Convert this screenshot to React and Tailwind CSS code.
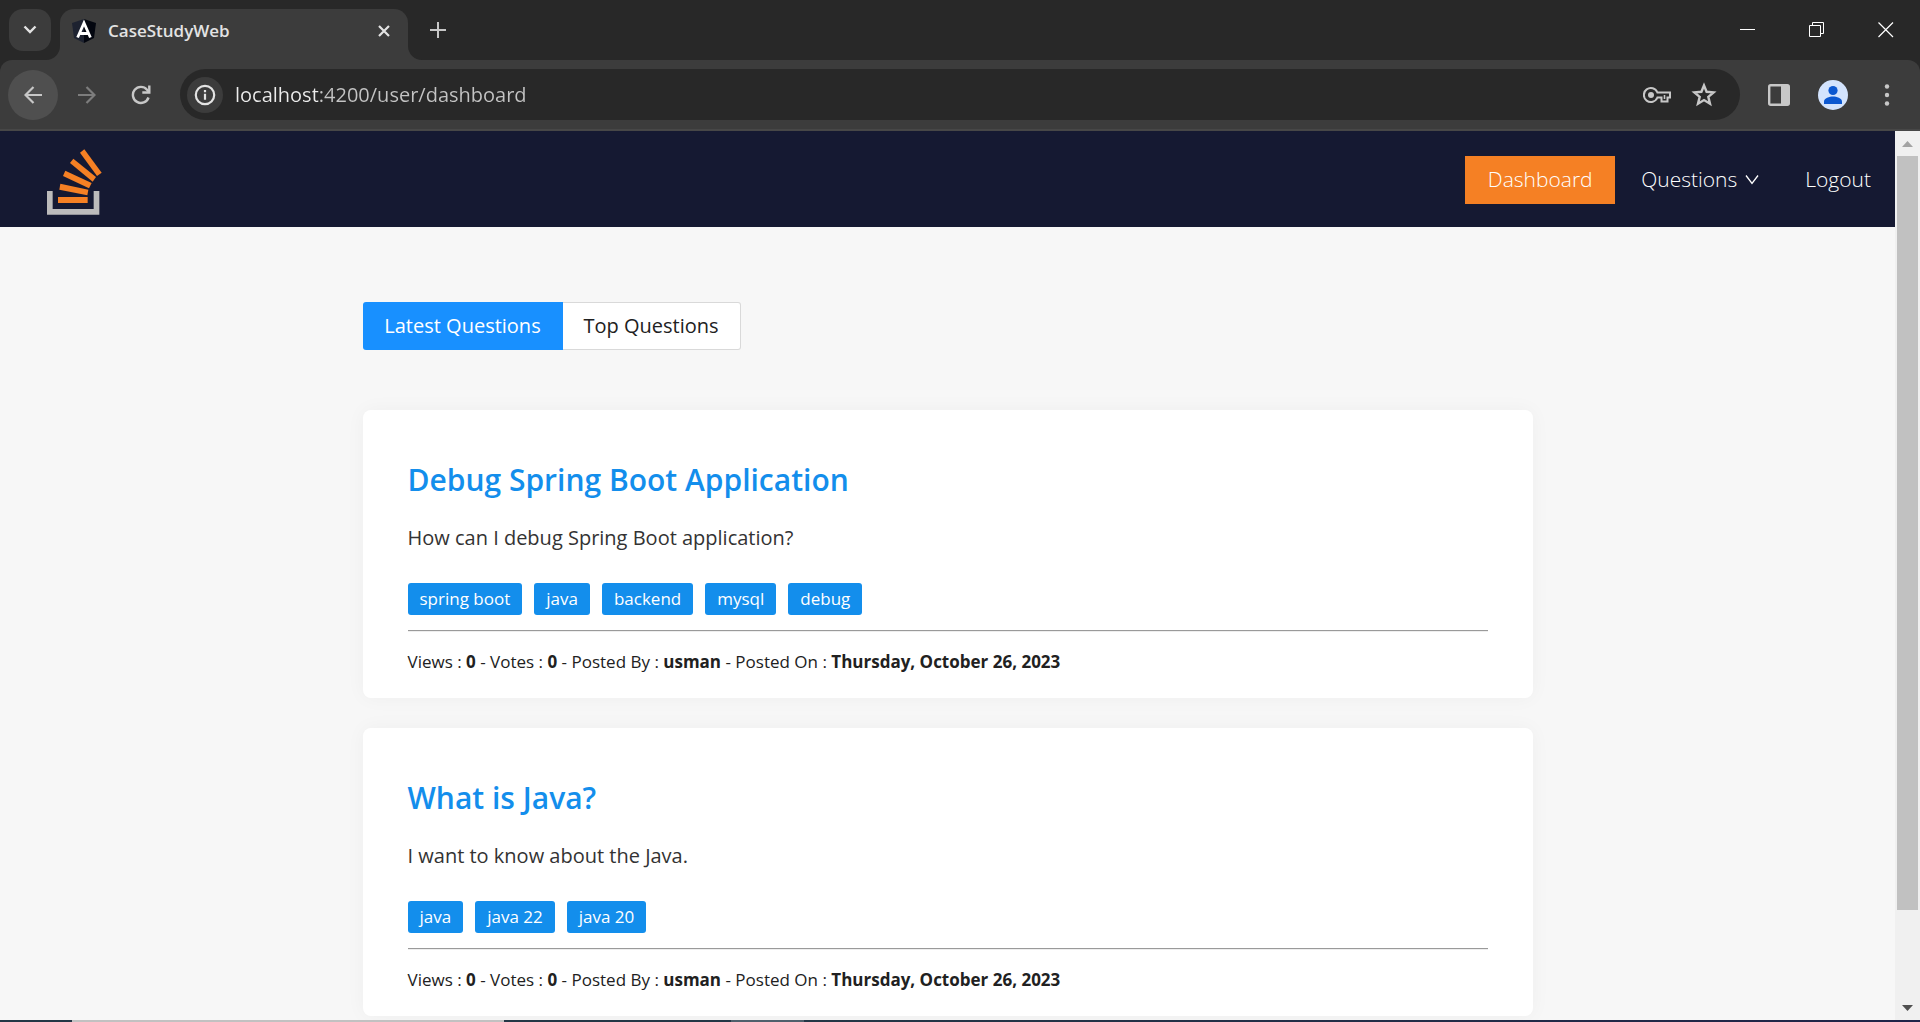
const questions = [
  {
    title: "Debug Spring Boot Application",
    body: "How can I debug Spring Boot application?",
    tags: ["spring boot", "java", "backend", "mysql", "debug"],
    views: 0,
    votes: 0,
    author: "usman",
    date: "Thursday, October 26, 2023",
  },
  {
    title: "What is Java?",
    body: "I want to know about the Java.",
    tags: ["java", "java 22", "java 20"],
    views: 0,
    votes: 0,
    author: "usman",
    date: "Thursday, October 26, 2023",
  },
];

function AngularIcon() {
  return (
    <svg width="24" height="24" viewBox="0 0 24 24" aria-hidden="true">
      <path d="M12 0 24 4l-2 15-10 5Z" fill="#03060f" />
      <path d="M12 0 0 4l2 15 10 5Z" fill="#1d2230" />
      <path d="M5.600 18.500 12 4l6.400 14.500M8.400 14.500h7.200" fill="none" stroke="#fff" strokeWidth="2.800" />
    </svg>
  );
}

function TabStrip() {
  return (
    <div className="flex h-[60px] items-start bg-[#282828] pl-[9px] pt-[9px] text-[#e3e3e3]">
      <button aria-label="Search tabs" className="flex size-[42px] items-center justify-center rounded-[14px] bg-[#3c3c3c]">
        <svg width="14" height="10" viewBox="0 0 14 10" fill="none" stroke="currentColor" strokeWidth="2.400">
          <path d="m1.500 1.500 5.500 5.500 5.500-5.500" />
        </svg>
      </button>
      <div className="relative ml-[9px] flex h-[51px] w-[348px] items-center rounded-t-[14px] bg-[#3c3c3c] pb-4 pl-3 pr-[18px]">
        <svg className="absolute -left-3.5 bottom-0" width="14" height="14" viewBox="0 0 14 14" fill="#3c3c3c" aria-hidden="true">
          <path d="M14 0v14H0A14 14 0 0 0 14 0Z" />
        </svg>
        <svg className="absolute -right-3.5 bottom-0" width="14" height="14" viewBox="0 0 14 14" fill="#3c3c3c" aria-hidden="true">
          <path d="M0 0v14h14A14 14 0 0 1 0 0Z" />
        </svg>
        <div className="flex w-full items-center pt-2">
          <AngularIcon />
          <span className="ml-3 flex-1 text-[17px] leading-6 font-semibold">CaseStudyWeb</span>
          <button aria-label="Close tab">
            <svg width="12" height="12" viewBox="0 0 12 12" fill="none" stroke="currentColor" strokeWidth="2.200">
              <path d="m1 1 10 10M11 1 1 11" />
            </svg>
          </button>
        </div>
      </div>
      <button aria-label="New tab" className="ml-[22px] mt-[13px]">
        <svg width="16" height="16" viewBox="0 0 16 16" fill="none" stroke="#c7c7c7" strokeWidth="2">
          <path d="M8 0v16M0 8h16" />
        </svg>
      </button>
      <div className="ml-auto mt-3 flex gap-[53px] pr-[26px] text-white">
        <button aria-label="Minimize">
          <svg width="16" height="17" viewBox="0 0 16 17" stroke="currentColor"><path d="M0 8.500h15" /></svg>
        </button>
        <button aria-label="Restore">
          <svg width="16" height="17" viewBox="0 0 16 17" fill="none" stroke="currentColor">
            <path d="M.5 4.500h11v11H.5ZM3.500 4.500v-3h11v11h-3" />
          </svg>
        </button>
        <button aria-label="Close">
          <svg width="16" height="17" viewBox="0 0 16 17" fill="none" stroke="currentColor" strokeWidth="1.200">
            <path d="m.5 1.500 14.500 14.500M15 1.500.5 16" />
          </svg>
        </button>
      </div>
    </div>
  );
}

function Toolbar() {
  return (
    <div className="bg-[#282828]">
      <div className="flex h-[71px] items-center rounded-t-xl border-b-2 border-[#474747] bg-[#3c3c3c] pl-2 text-[#c7c7c7]">
        <button aria-label="Back" className="flex size-[50px] items-center justify-center rounded-full bg-[#4f4f4f]">
          <svg width="18" height="18" viewBox="0 0 18 18" fill="none" stroke="currentColor" strokeWidth="2.200">
            <path d="M18 9H2M9.500 1 1.500 9l8 8" />
          </svg>
        </button>
        <button aria-label="Forward" className="ml-5" disabled>
          <svg width="18" height="18" viewBox="0 0 18 18" fill="none" stroke="#7d7d7d" strokeWidth="2.200">
            <path d="M0 9h16M8.500 1l8 8-8 8" />
          </svg>
        </button>
        <button aria-label="Reload" className="ml-[35px]">
          <svg width="20" height="20" viewBox="0 0 20 20" fill="none" stroke="currentColor" strokeWidth="2.400">
            <path d="M17.500 12.500A8 8 0 1 1 16 4.700L18 7" />
            <path d="M18.300.5v7h-7" />
          </svg>
        </button>
        <div className="ml-[29px] flex h-[51px] flex-1 items-center rounded-full bg-[#282828] pl-[7px] pr-[23px]">
          <button aria-label="View site information" className="flex size-9 items-center justify-center rounded-full bg-[#3c3c3c] text-[#e3e3e3]">
            <svg width="22" height="22" viewBox="0 0 22 22" fill="none" stroke="currentColor" strokeWidth="2.200">
              <circle cx="11" cy="11" r="9.200" />
              <path d="M11 9.800v6M11 6v2.200" />
            </svg>
          </button>
          <input
            aria-label="Address"
            defaultValue="localhost:4200/user/dashboard"
            className="ml-3 h-9 min-w-0 flex-1 bg-[linear-gradient(90deg,#ececec_83px,#c4c4c4_83px)] bg-clip-text text-[20px] text-transparent outline-none"
          />
          <button aria-label="Passwords">
            <svg width="28" height="18" viewBox="0 0 28 18" fill="none" stroke="currentColor" strokeWidth="2">
              <path d="M14.400 6.500A7 7 0 1 0 14.400 11.500H18.500V15.500H24.500V11.500H27V6.500Z" />
              <circle cx="8" cy="9" r="3" fill="currentColor" stroke="none" />
              <path d="M21.500 9v4" strokeWidth="1.600" />
            </svg>
          </button>
          <button aria-label="Bookmark this tab" className="ml-[20px]">
            <svg width="26" height="26" viewBox="0 0 26 26" fill="none" stroke="currentColor" strokeWidth="2.400">
              <path d="m13 3.500 2.600 6.300 7 .6-5.300 4.500 1.700 6.900-6-3.700-6 3.700 1.700-6.900-5.300-4.500 7-.6Z" />
            </svg>
          </button>
        </div>
        <button aria-label="Side panel" className="ml-7">
          <svg width="22" height="22" viewBox="0 0 22 22" fill="none" stroke="currentColor" strokeWidth="2.400">
            <rect x="1.200" y="1.200" width="19.600" height="19.600" rx="1.500" />
            <path d="M13 1h8v20h-8Z" fill="currentColor" stroke="none" />
          </svg>
        </button>
        <button aria-label="Profile" className="ml-7">
          <svg width="30" height="30" viewBox="0 0 30 30" fill="#0b57d0">
            <circle cx="15" cy="15" r="15" fill="#d3e3fd" />
            <circle cx="15" cy="10.500" r="4.600" />
            <path d="M6 24v-2.500c0-3.300 5.500-5 9-5s9 1.700 9 5V24Z" />
          </svg>
        </button>
        <button aria-label="Menu" className="ml-9 mr-[30px]">
          <svg width="6" height="22" viewBox="0 0 6 22" fill="currentColor">
            <circle cx="3" cy="2.500" r="2.200" />
            <circle cx="3" cy="11" r="2.200" />
            <circle cx="3" cy="19.500" r="2.200" />
          </svg>
        </button>
      </div>
    </div>
  );
}

function Logo() {
  return (
    <svg width="56" height="68" viewBox="78 54 168 204" role="img" aria-label="Home">
      <path d="M89.500 183v62.500h140V183" fill="none" stroke="#bcbbbb" strokeWidth="17" />
      <g fill="#f58024">
        <path d="M114 201h89v18h-89Z" />
        <path d="m121 161 84 18-3 17-84-17Z" />
        <path d="m136 122 79 37-8 16-78-37Z" />
        <path d="m160 86 68 55-10 14-68-56Z" />
        <path d="m193 58 52 70-14 10-51-70Z" />
      </g>
    </svg>
  );
}

function SiteNav() {
  return (
    <header className="flex h-24 items-center bg-[#151932] pl-[46px] pt-0.5 text-[21px] font-light text-white">
      <a href="#home" className="pt-1"><Logo /></a>
      <nav className="ml-auto flex items-center">
        <a href="#dashboard" className="flex h-12 w-[150px] items-center justify-center bg-[#f58024]">Dashboard</a>
        <button className="ml-[26px] flex items-center gap-2">
          Questions
          <svg width="14" height="10" viewBox="0 0 14 10" fill="none" stroke="currentColor" strokeWidth="1.300">
            <path d="m1 .5 6 8 6-8" />
          </svg>
        </button>
        <a href="#logout" className="ml-[46px] mr-[24px]">Logout</a>
      </nav>
    </header>
  );
}

function QuestionCard({ question }) {
  return (
    <article className="rounded-lg bg-white px-[45px] pb-5 pt-[45px] shadow-[0_0_20px_rgba(0,0,0,0.040)]">
      <h2 className="text-[30px] leading-[50px] font-semibold text-[#138eec]">
        <a href="#question">{question.title}</a>
      </h2>
      <p className="mt-[17px] text-[20px] leading-8 text-[#333333]">{question.body}</p>
      <ul className="mt-[29px] flex gap-3">
        {question.tags.map((tag) => (
          <li key={tag} className="h-8 rounded-[3px] bg-[#138eec] px-3 text-[17px] leading-8 text-white">
            {tag}
          </li>
        ))}
      </ul>
      <hr className="mt-[15px] border-t border-b border-t-[#9a9a9a] border-b-[#eeeeee]" />
      <p className="mt-3.5 text-[17px] leading-8">
        Views : <b>{question.views}</b> - Votes : <b>{question.votes}</b> - Posted By :{" "}
        <b>{question.author}</b> - Posted On : <b>{question.date}</b>
      </p>
    </article>
  );
}

function Scrollbar() {
  return (
    <div className="flex w-[25px] shrink-0 flex-col items-center bg-[#f0f0f0]" aria-hidden="true">
      <svg className="shrink-0" width="25" height="25" viewBox="0 0 25 25"><path d="m12.500 10 5.500 6H7Z" fill="#a3a3a3" /></svg>
      <div className="w-[21px] flex-[754] bg-[#c1c1c1]" />
      <div className="flex-[85]" />
      <svg className="shrink-0" width="25" height="25" viewBox="0 0 25 25"><path d="m12.500 16 5.500-6H7Z" fill="#505050" /></svg>
    </div>
  );
}

export default function App() {
  return (
    <div className="flex h-screen flex-col overflow-hidden font-['Open_Sans','Noto_Sans',sans-serif] text-[#212121]">
      <TabStrip />
      <Toolbar />
      <div className="flex min-h-0 flex-1">
        <div className="min-w-0 flex-1 overflow-hidden bg-[#f7f7f7]">
          <SiteNav />
          <main className="mx-auto w-full max-w-[1170px] pt-[75px]">
            <div className="flex text-[20px]">
              <button className="h-12 w-[200px] rounded-l-[3px] bg-[#1890ff] text-white">Latest Questions</button>
              <button className="h-12 w-[178px] rounded-r-[3px] border border-l-0 border-[#d9d9d9] bg-white">Top Questions</button>
            </div>
            <div className="mt-[60px] flex flex-col gap-[30px]">
              {questions.map((question) => (
                <QuestionCard key={question.title} question={question} />
              ))}
            </div>
          </main>
        </div>
        <Scrollbar />
      </div>
      <div className="flex h-0.5 shrink-0 bg-[#233746]">
        <div className="ml-[72px] w-[432px] bg-[#c1c1c1]" />
        <div className="ml-[227px] w-[73px] bg-[#4f606c]" />
        <div className="flex-1 bg-linear-to-r from-[#233746] to-[#1f2348]" />
      </div>
    </div>
  );
}
